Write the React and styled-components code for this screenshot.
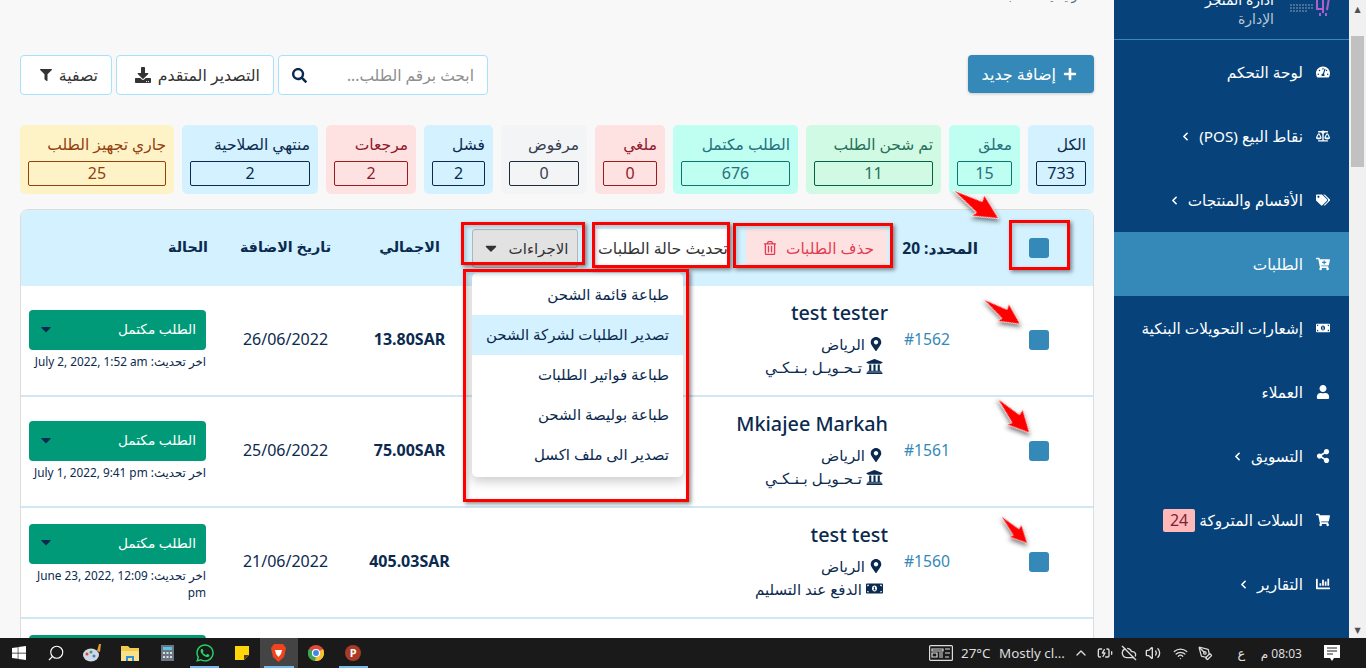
import styled, { createGlobalStyle } from "styled-components";
import {
  FaBalanceScale,
  FaCaretDown,
  FaCartPlus,
  FaChartBar,
  FaDownload,
  FaFilter,
  FaMapMarkerAlt,
  FaMoneyBillAlt,
  FaPlus,
  FaRegTrashAlt,
  FaSearch,
  FaShareAlt,
  FaShoppingCart,
  FaTachometerAlt,
  FaTags,
  FaUniversity,
  FaUser,
  FaWhatsapp,
  FaWindows,
} from "react-icons/fa";
import { BatteryCharging, ChevronLeft, ChevronUp, CloudOff, PenTool, Search, Volume2, Wifi } from "lucide-react";

const navItems = [
  { label: "لوحة التحكم", icon: FaTachometerAlt },
  { label: "نقاط البيع (POS)", icon: FaBalanceScale, more: true },
  { label: "الأقسام والمنتجات", icon: FaTags, more: true },
  { label: "الطلبات", icon: FaCartPlus, active: true },
  { label: "إشعارات التحويلات البنكية", icon: FaMoneyBillAlt },
  { label: "العملاء", icon: FaUser },
  { label: "التسويق", icon: FaShareAlt, more: true },
  { label: "السلات المتروكة", icon: FaShoppingCart, badge: 24 },
  { label: "التقارير", icon: FaChartBar, more: true },
];

const stats = [
  { label: "الكل", value: 733, tone: "blue", width: 66 },
  { label: "معلق", value: 15, tone: "teal", width: 71 },
  { label: "تم شحن الطلب", value: 11, tone: "green", width: 135 },
  { label: "الطلب مكتمل", value: 676, tone: "teal", width: 125 },
  { label: "ملغي", value: 0, tone: "red", width: 70 },
  { label: "مرفوض", value: 0, tone: "gray", width: 86 },
  { label: "فشل", value: 2, tone: "blue", width: 69 },
  { label: "مرجعات", value: 2, tone: "red", width: 90 },
  { label: "منتهي الصلاحية", value: 2, tone: "blue", width: 136 },
  { label: "جاري تجهيز الطلب", value: 25, tone: "yellow", width: 154 },
];

const orders = [
  { id: "#1562", name: "test tester", pay: "تـحـويـل بـنـكـي", bank: true, total: "13.80SAR", date: "26/06/2022", updated: "July 2, 2022, 1:52 am" },
  { id: "#1561", name: "Mkiajee Markah", pay: "تـحـويـل بـنـكـي", bank: true, total: "75.00SAR", date: "25/06/2022", updated: "July 1, 2022, 9:41 pm" },
  { id: "#1560", name: "test test", pay: "الدفع عند التسليم", total: "405.03SAR", date: "21/06/2022", updated: "June 23, 2022, 12:09 pm" },
  { id: "#1559", name: "test test", pay: "الدفع عند التسليم", total: "405.03SAR", date: "20/06/2022", updated: "June 22, 2022, 12:09 pm" },
];

const menuItems = [
  "طباعة قائمة الشحن",
  "تصدير الطلبات لشركة الشحن",
  "طباعة فواتير الطلبات",
  "طباعة بوليصة الشحن",
  "تصدير الى ملف اكسل",
];

const redBoxes = [
  { x: 1009, y: 220, w: 61, h: 50 },
  { x: 733, y: 223, w: 160, h: 45 },
  { x: 592, y: 222, w: 138, h: 46 },
  { x: 461, y: 222, w: 124, h: 43 },
  { x: 463, y: 269, w: 226, h: 233 },
];

const arrows = [
  { x: 953, y: 190, len: 54, angle: 32 },
  { x: 983, y: 299, len: 45, angle: 34 },
  { x: 997, y: 398, len: 48, angle: 47 },
  { x: 1001, y: 516, len: 38, angle: 46 },
];

function Logo() {
  return (
    <LogoMark viewBox="0 0 42 18">
      <path d="M1 7h23M1 10h23M1 13h18" stroke="#5f7f9f" strokeWidth="1.4" strokeDasharray="2 1" />
      <path d="M28 0v11h6M34 0v15M40 0l-2 12M31 15v3M37 15v3" stroke="#b05fd0" strokeWidth="2" fill="none" />
    </LogoMark>
  );
}

function Sidebar() {
  return (
    <Side dir="rtl">
      <SideHead>
        <LogoSlot>
          <Logo />
        </LogoSlot>
        <SideTitle>
          <strong>ادارة المتجر</strong>
          <span>الإدارة</span>
        </SideTitle>
      </SideHead>
      {navItems.map(({ label, icon: Icon, active, more, badge }) => (
        <NavItem key={label} $active={active}>
          <NavIcon>
            <Icon size={14} />
          </NavIcon>
          <span>{label}</span>
          {more && <ChevronLeft size={13} strokeWidth={3} />}
          {badge && <NavBadge>{badge}</NavBadge>}
        </NavItem>
      ))}
    </Side>
  );
}

function OrderRow({ order }) {
  return (
    <Row>
      <CheckCell>
        <Check />
      </CheckCell>
      <OrderId>{order.id}</OrderId>
      <Customer>
        <Name>{order.name}</Name>
        <Meta>
          <FaMapMarkerAlt size={14} />
          الرياض
        </Meta>
        <Meta>
          {order.bank ? <FaUniversity size={17} /> : <FaMoneyBillAlt size={17} />}
          {order.pay}
        </Meta>
      </Customer>
      <Total>{order.total}</Total>
      <DateCell>{order.date}</DateCell>
      <Status>
        <StatusButton>
          الطلب مكتمل
          <FaCaretDown size={16} />
        </StatusButton>
        <Updated>اخر تحديث: {order.updated}</Updated>
      </Status>
    </Row>
  );
}

function Taskbar() {
  return (
    <Bar>
      <TaskGroup>
        <TaskIcon><FaWindows size={16} color="#fff" /></TaskIcon>
        <TaskIcon><Search size={18} color="#fff" strokeWidth={1.5} style={{ transform: "scaleX(-1)" }} /></TaskIcon>
        <TaskIcon>
          <svg width="20" height="20" viewBox="0 0 20 20">
            <ellipse cx="8" cy="12" rx="8" ry="6.5" fill="#cfd8e6" />
            <circle cx="4" cy="11" r="1.5" fill="#d9453a" />
            <circle cx="8" cy="9" r="1.5" fill="#4a9c4c" />
            <circle cx="11" cy="13" r="1.5" fill="#3a7fd5" />
            <path d="M14 8l2-7h2l-1 8z" fill="#e29a3c" />
          </svg>
        </TaskIcon>
        <TaskIcon>
          <svg width="18" height="16" viewBox="0 0 18 16">
            <path d="M0 1h7l2 2h9v13H0z" fill="#f3c94f" />
            <path d="M0 6h18v10H0z" fill="#fbe08a" />
            <path d="M5 11h8v5h-2v-3H7v3H5z" fill="#2f8fd8" />
          </svg>
        </TaskIcon>
        <TaskIcon>
          <svg width="13" height="16" viewBox="0 0 13 16">
            <path d="M0 0h13v16H0z" fill="#6d7680" />
            <path d="M2 2h9v3H2z" fill="#59c3e8" />
            <path d="M2 7h2v2H2zM5.500 7h2v2h-2zM9 7h2v2H9zM2 11h2v2H2zM5.500 11h2v2h-2zM9 11h2v2H9z" fill="#d7dde2" />
          </svg>
        </TaskIcon>
        <TaskIcon $open><FaWhatsapp size={20} color="#25d366" /></TaskIcon>
        <TaskIcon>
          <svg width="14" height="14" viewBox="0 0 14 14">
            <path d="M0 0h14v9l-5 5H0z" fill="#ffd60a" />
            <path d="M9 14v-5h5z" fill="#4b4020" />
          </svg>
        </TaskIcon>
        <TaskIcon $open $current>
          <svg width="15" height="18" viewBox="0 0 15 18">
            <path d="M3 0h9l3 4-2 9-5.500 5L2 13 0 4z" fill="#f0441f" />
            <path d="M4 6h7l-1 4-2.500 3L5 10z" fill="#fff" />
          </svg>
        </TaskIcon>
        <TaskIcon>
          <svg width="16" height="16" viewBox="0 0 16 16">
            <circle cx="8" cy="8" r="8" fill="#e04a3a" />
            <path d="M8 8l7-4a8 8 0 0 1-8 12z" fill="#f4c430" />
            <path d="M8 8l-1 8a8 8 0 0 1-6-12z" fill="#3aa655" />
            <circle cx="8" cy="8" r="3.500" fill="#3f87e8" stroke="#fff" strokeWidth="1.200" />
          </svg>
        </TaskIcon>
        <TaskIcon $open><ProxyBadge>P</ProxyBadge></TaskIcon>
      </TaskGroup>
      <Tray>
        <svg width="24" height="16" viewBox="0 0 24 16" fill="none" stroke="#ddd" strokeWidth="1.200">
          <rect x="0.600" y="0.600" width="22.800" height="14.800" rx="1" />
          <path d="M3 4h11v2H3zM3 8h5v4H3zM10 8h4M10 10h4M10 12h4M16 4h5M16 8h5M16 12h4" />
        </svg>
        <TrayText $left={8} $width={38}>27°C</TrayText>
        <TrayText $width={70}>Mostly cl...</TrayText>
        <TrayIcon><ChevronUp size={16} /></TrayIcon>
        <TrayIcon><BatteryCharging size={16} /></TrayIcon>
        <TrayIcon><CloudOff size={16} /></TrayIcon>
        <TrayIcon><Volume2 size={16} /></TrayIcon>
        <TrayIcon $left={3}><Wifi size={15} /></TrayIcon>
        <TrayIcon $left={1}><PenTool size={15} /></TrayIcon>
        <Lang>ع</Lang>
        <Clock dir="rtl">08:03 م</Clock>
        <Notify>
          <svg width="16" height="17" viewBox="0 0 16 17">
            <path d="M0 0h16v13h-6l-2 3-2-3H0z" fill="#fff" />
            <path d="M3 3h10M3 6h10M3 9h6" stroke="#222" strokeWidth="1" />
          </svg>
        </Notify>
      </Tray>
    </Bar>
  );
}

export default function App() {
  return (
    <>
      <Global />
      <Screen>
        <Workspace>
          <Main dir="rtl">
            <Crumb>الرئيسية / الطلبات</Crumb>
            <Toolbar>
              <AddButton>
                <FaPlus size={14} />
                إضافة جديد
              </AddButton>
              <Tools>
                <SearchBox>
                  <SearchInput placeholder="ابحث برقم الطلب..." readOnly />
                  <FaSearch size={15} />
                </SearchBox>
                <ToolButton $width={158}>
                  التصدير المتقدم
                  <FaDownload size={16} />
                </ToolButton>
                <ToolButton $width={92}>
                  تصفية
                  <FaFilter size={12} />
                </ToolButton>
              </Tools>
            </Toolbar>
            <Stats>
              {stats.map((s) => (
                <Stat key={s.label} $tone={s.tone} $width={s.width}>
                  <StatLabel>{s.label}</StatLabel>
                  <StatValue $tone={s.tone}>{s.value}</StatValue>
                </Stat>
              ))}
            </Stats>
            <Card>
              <HeadRow>
                <CheckCell>
                  <Check />
                </CheckCell>
                <Bulk>
                  <Selected>المحدد: 20</Selected>
                  <DeleteButton>
                    حذف الطلبات
                    <FaRegTrashAlt size={14} />
                  </DeleteButton>
                  <PlainButton>تحديث حالة الطلبات</PlainButton>
                  <ActionsWrap>
                    <ActionsButton>
                      الاجراءات
                      <FaCaretDown size={18} />
                    </ActionsButton>
                    <Menu>
                      {menuItems.map((item, i) => (
                        <MenuItem key={item} $active={i === 1}>{item}</MenuItem>
                      ))}
                    </Menu>
                  </ActionsWrap>
                </Bulk>
                <HeadCell>الاجمالي</HeadCell>
                <HeadCell>تاريخ الاضافة</HeadCell>
                <HeadStatus>الحالة</HeadStatus>
              </HeadRow>
              {orders.map((o) => (
                <OrderRow key={o.id} order={o} />
              ))}
            </Card>
          </Main>
          <Sidebar />
          <Scroll>
            <ScrollArrow>▲</ScrollArrow>
            <Thumb />
            <ScrollArrow>▼</ScrollArrow>
          </Scroll>
        </Workspace>
        <Taskbar />
        {redBoxes.map((b) => (
          <RedBox key={b.x} $x={b.x} $y={b.y} $w={b.w} $h={b.h} />
        ))}
        {arrows.map((a) => (
          <Arrow key={a.y} $x={a.x} $y={a.y} $angle={a.angle} width={a.len} height={a.len * 0.5} viewBox="0 -14 56 28">
            <polygon points="0,0 32,-6 30,-13 56,0 30,13 33,7" />
          </Arrow>
        ))}
      </Screen>
    </>
  );
}

const tones = {
  blue: { bg: "#d3f1fe", text: "#0b2a4f", line: "#0b2a4f" },
  teal: { bg: "#bffff1", text: "#27707c", line: "#0f766e" },
  green: { bg: "#d1fae5", text: "#27705a", line: "#065f46" },
  red: { bg: "#fee2e2", text: "#8f1a2c", line: "#991b1b" },
  gray: { bg: "#f3f4f6", text: "#374151", line: "#1f2937" },
  yellow: { bg: "#fef3c7", text: "#92400e", line: "#92400e" },
};

const Global = createGlobalStyle`
  html, body {
    margin: 0;
    height: 100%;
    overflow: hidden;
  }
  body {
    font-family: "Noto Sans", "Open Sans", "DejaVu Sans", sans-serif;
    color: #0b2a4f;
  }
  * {
    box-sizing: border-box;
  }
`;

const Screen = styled.div`
  position: relative;
  display: flex;
  flex-direction: column;
  height: 668px;
  overflow: hidden;
`;

const Workspace = styled.div`
  display: flex;
  height: 638px;
  overflow: hidden;
`;

const Main = styled.main`
  width: 1114px;
  padding: 0 20px;
  background: #f8f8f8;
  overflow: hidden;
`;

const Crumb = styled.div`
  height: 55px;
  margin-top: -11px;
  margin-bottom: 11px;
  padding-right: 9px;
  font-size: 12px;
  line-height: 14px;
  color: #5a6b7d;
`;

const Toolbar = styled.div`
  display: flex;
  justify-content: space-between;
  align-items: flex-start;
`;

const AddButton = styled.button`
  display: flex;
  align-items: center;
  gap: 7px;
  width: 126px;
  height: 38px;
  padding: 0 17px 0 0;
  border: 0;
  border-radius: 4px;
  background: #3589b8;
  color: #fff;
  font: inherit;
  font-size: 16px;
  box-shadow: 0 1px 3px rgba(0, 0, 0, 0.2);
`;

const Tools = styled.div`
  display: flex;
  gap: 4px;
`;

const SearchBox = styled.div`
  display: flex;
  align-items: center;
  width: 210px;
  height: 40px;
  padding: 0 13px;
  border: 1px solid #a6e3fb;
  border-radius: 4px;
  background: #fff;
  color: #0b2a4f;
`;

const SearchInput = styled.input`
  flex: 1;
  min-width: 0;
  padding: 0;
  border: 0;
  outline: 0;
  background: none;
  font: inherit;
  font-size: 15.5px;
  &::placeholder {
    color: #8e8e8e;
  }
`;

const ToolButton = styled.button`
  display: flex;
  align-items: center;
  gap: 7px;
  width: ${(p) => p.$width}px;
  height: 40px;
  padding: 0 13px;
  border: 1px solid #a6e3fb;
  border-radius: 4px;
  background: #fff;
  color: #333;
  font: inherit;
  font-size: 15.8px;
`;

const Stats = styled.div`
  display: flex;
  gap: 8px;
  margin-top: 30px;
`;

const Stat = styled.div`
  display: flex;
  flex-direction: column;
  width: ${(p) => p.$width}px;
  height: 69px;
  padding: 8px;
  border-radius: 5px;
  background: ${(p) => tones[p.$tone].bg};
  color: ${(p) => tones[p.$tone].text};
`;

const StatLabel = styled.div`
  height: 28px;
  font-size: 15.5px;
  line-height: 22px;
  white-space: nowrap;
`;

const StatValue = styled.div`
  height: 25px;
  border: 1px solid ${(p) => tones[p.$tone].line};
  border-radius: 2px;
  font-size: 16px;
  line-height: 23px;
  text-align: center;
`;

const Card = styled.section`
  margin-top: 15px;
  border: 1px solid #dcdcdc;
  border-radius: 8px 8px 0 0;
  background: #fff;
`;

const HeadRow = styled.div`
  display: grid;
  grid-template-columns: 115px 518px 101px 147px 1fr;
  align-items: center;
  height: 76px;
  border-radius: 8px 8px 0 0;
  background: #d3f1fe;
`;

const Row = styled.div`
  display: grid;
  grid-template-columns: 133px 62px 438px 101px 147px 1fr;
  align-items: center;
  min-height: 111px;
  border-bottom: 2px solid #cfe8f3;
`;

const CheckCell = styled.div`
  padding: 0 44px 1px 0;
`;

const Check = styled.div`
  width: 20px;
  height: 20px;
  border-radius: 3px;
  background: #3589b8;
`;

const Bulk = styled.div`
  display: flex;
  align-items: center;
  height: 39px;
`;

const Selected = styled.div`
  width: 91px;
  font-size: 15.5px;
  font-weight: 700;
  white-space: nowrap;
`;

const DeleteButton = styled.button`
  display: flex;
  align-items: center;
  gap: 9px;
  width: 141px;
  height: 39px;
  padding: 0 13px;
  border: 0;
  border-radius: 3px;
  background: #fee2e2;
  color: #e53b52;
  font: inherit;
  font-size: 15.4px;
`;

const PlainButton = styled.button`
  width: 134px;
  height: 39px;
  margin-right: 16px;
  padding: 0;
  border: 0;
  background: #fff;
  color: #333;
  font: inherit;
  font-size: 15.7px;
  white-space: nowrap;
`;

const ActionsWrap = styled.div`
  position: relative;
  margin-right: 18px;
`;

const ActionsButton = styled.button`
  display: flex;
  align-items: center;
  justify-content: center;
  gap: 9px;
  width: 106px;
  height: 39px;
  border: 1px solid #b5b5b5;
  border-radius: 3px;
  background: #e2e2e2;
  color: #333;
  font: inherit;
  font-size: 15px;
`;

const Menu = styled.div`
  position: absolute;
  top: 44px;
  right: -105px;
  width: 211px;
  padding: 2px 0;
  border-radius: 5px;
  background: #fff;
  box-shadow: 0 4px 12px rgba(0, 0, 0, 0.22);
  z-index: 3;
`;

const MenuItem = styled.div`
  height: 40px;
  padding: 0 14px;
  background: ${(p) => (p.$active ? "#d3f1fe" : "transparent")};
  font-size: 15px;
  line-height: 38px;
  white-space: nowrap;
`;

const HeadCell = styled.div`
  padding-bottom: 3px;
  font-size: 14.3px;
  font-weight: 700;
  text-align: center;
`;

const HeadStatus = styled.div`
  padding: 0 4px 3px 0;
  font-size: 14.3px;
  font-weight: 700;
`;

const OrderId = styled.div`
  padding: 0 10px 3px 0;
  direction: ltr;
  text-align: right;
  color: #3589b8;
  font-size: 15.7px;
`;

const Customer = styled.div`
  padding: 0 10px 4px 0;
`;

const Name = styled.div`
  margin-bottom: 5px;
  font-size: 19.8px;
  font-weight: 500;
  line-height: 28px;
`;

const Meta = styled.div`
  display: flex;
  align-items: center;
  gap: 4px;
  height: 23px;
  padding-right: 5px;
  font-size: 15px;
`;

const Total = styled.div`
  padding-bottom: 3px;
  font-size: 16px;
  font-weight: 700;
  text-align: center;
`;

const DateCell = styled.div`
  padding-bottom: 3px;
  font-size: 16px;
  text-align: center;
`;

const Status = styled.div`
  padding: 0 6px 1px 8px;
`;

const StatusButton = styled.div`
  display: flex;
  align-items: center;
  justify-content: space-between;
  height: 40px;
  padding: 0 10px 3px 9px;
  border-radius: 4px;
  background: #009a78;
  color: #fff;
  font-size: 13.7px;
  svg {
    color: #0b2a4f;
  }
`;

const Updated = styled.div`
  margin-top: 3px;
  font-size: 11.8px;
  line-height: 17px;
`;

const Side = styled.aside`
  width: 235px;
  background: #07437a;
  color: #fff;
  overflow: hidden;
`;

const SideHead = styled.div`
  display: flex;
  align-items: flex-start;
  height: 40px;
  padding-right: 18px;
  border-bottom: 1px solid #3589b8;
`;

const LogoSlot = styled.div`
  width: 57px;
  margin-top: -2px;
`;

const LogoMark = styled.svg`
  width: 42px;
  height: 18px;
`;

const SideTitle = styled.div`
  display: flex;
  flex-direction: column;
  margin-top: -10px;
  font-size: 14px;
  line-height: 19px;
  strong {
    font-weight: 400;
  }
  span {
    color: #b9c6d4;
  }
`;

const NavItem = styled.div`
  display: flex;
  align-items: center;
  gap: 7px;
  height: 64px;
  padding-right: 18px;
  background: ${(p) => (p.$active ? "#3589b8" : "transparent")};
  font-size: 15.3px;
  white-space: nowrap;
`;

const NavIcon = styled.div`
  display: flex;
  justify-content: center;
  width: 16px;
  margin-left: 5px;
`;

const NavBadge = styled.span`
  margin-right: -3px;
  padding: 0 7px;
  border-radius: 2px;
  background: #ffb9b9;
  color: #7a1f3a;
  font-size: 16px;
  line-height: 23px;
`;

const Scroll = styled.div`
  display: flex;
  flex-direction: column;
  justify-content: space-between;
  width: 17px;
  background: #f1f1f1;
`;

const ScrollArrow = styled.div`
  height: 17px;
  color: #505050;
  font-size: 8px;
  line-height: 17px;
  text-align: center;
`;

const Thumb = styled.div`
  flex: none;
  width: 13px;
  height: 131px;
  margin: 19px 2px auto;
  background: #c1c1c1;
`;

const Bar = styled.footer`
  display: flex;
  justify-content: space-between;
  height: 30px;
  background: #1a1a1a;
`;

const TaskGroup = styled.div`
  display: flex;
`;

const TaskIcon = styled.div`
  position: relative;
  display: flex;
  align-items: center;
  justify-content: center;
  width: 37.2px;
  background: ${(p) => (p.$current ? "#444" : "transparent")};
  &::after {
    content: "";
    display: ${(p) => (p.$open ? "block" : "none")};
    position: absolute;
    left: 4px;
    right: 4px;
    bottom: 0;
    height: 2px;
    background: #76b9ed;
  }
`;

const ProxyBadge = styled.div`
  width: 16px;
  height: 16px;
  border-radius: 50%;
  background: #a83a26;
  color: #fff;
  font-size: 11px;
  font-weight: 700;
  line-height: 16px;
  text-align: center;
`;

const Tray = styled.div`
  display: flex;
  align-items: center;
  padding-right: 26px;
  color: #ddd;
`;

const TrayText = styled.span`
  width: ${(p) => p.$width}px;
  margin-left: ${(p) => p.$left || 0}px;
  font-size: 13.4px;
  white-space: nowrap;
`;

const TrayIcon = styled.span`
  display: flex;
  justify-content: center;
  width: 24px;
  margin-left: ${(p) => p.$left || 0}px;
`;

const Lang = styled.span`
  width: 49px;
  text-align: center;
  font-size: 13px;
`;

const Clock = styled.span`
  width: 36px;
  font-size: 12px;
  white-space: nowrap;
`;

const Notify = styled.span`
  display: flex;
  justify-content: flex-end;
  width: 38px;
`;

const RedBox = styled.div`
  position: absolute;
  left: ${(p) => p.$x}px;
  top: ${(p) => p.$y}px;
  width: ${(p) => p.$w}px;
  height: ${(p) => p.$h}px;
  border: 3px solid #f00;
  box-shadow: 2px 2px 4px rgba(0, 0, 0, 0.45), inset 2px 2px 4px rgba(0, 0, 0, 0.2);
  pointer-events: none;
  z-index: 5;
`;

const Arrow = styled.svg`
  position: absolute;
  left: ${(p) => p.$x}px;
  top: ${(p) => p.$y}px;
  overflow: visible;
  transform-origin: 0 50%;
  transform: translateY(-50%) rotate(${(p) => p.$angle}deg);
  filter: drop-shadow(2px 2px 2px rgba(0, 0, 0, 0.5));
  z-index: 6;
  polygon {
    fill: #f00;
    stroke: #fff;
    stroke-width: 1;
  }
`;
